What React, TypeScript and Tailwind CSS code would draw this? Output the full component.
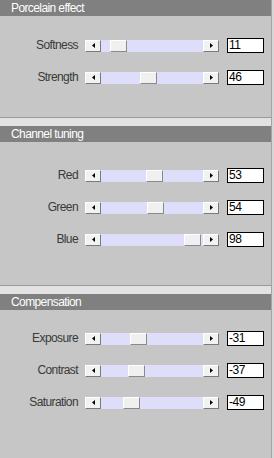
import React from "react";

type Row = { label: string; value: number; min: number; max: number };

const sections: { title: string; rows: Row[]; pt: string; pb: string }[] = [
  {
    title: "Porcelain effect",
    pt: "pt-[22px]",
    pb: "pb-[32px]",
    rows: [
      { label: "Softness", value: 11, min: 0, max: 100 },
      { label: "Strength", value: 46, min: 0, max: 100 },
    ],
  },
  {
    title: "Channel tuning",
    pt: "pt-[26px]",
    pb: "pb-[38px]",
    rows: [
      { label: "Red", value: 53, min: 0, max: 100 },
      { label: "Green", value: 54, min: 0, max: 100 },
      { label: "Blue", value: 98, min: 0, max: 100 },
    ],
  },
  {
    title: "Compensation",
    pt: "pt-[21px]",
    pb: "pb-[40px]",
    rows: [
      { label: "Exposure", value: -31, min: -100, max: 100 },
      { label: "Contrast", value: -37, min: -100, max: 100 },
      { label: "Saturation", value: -49, min: -100, max: 100 },
    ],
  },
];

const ArrowBtn = ({ dir }: { dir: "left" | "right" }) => (
  <div className="w-[16px] h-[12px] shrink-0 bg-[#f2f2f2] border border-t-white border-l-white border-b-[#7a7a7a] border-r-[#7a7a7a] flex items-center justify-center">
    <svg width="3" height="5" viewBox="0 0 3 5">
      {dir === "left" ? <path d="M3 0V5L0 2.5Z" fill="#000" /> : <path d="M0 0V5L3 2.5Z" fill="#000" />}
    </svg>
  </div>
);

const Slider = ({ row }: { row: Row }) => {
  const pct = (row.value - row.min) / (row.max - row.min);
  return (
    <div className="flex w-[134px] h-[12px] shrink-0">
      <ArrowBtn dir="left" />
      <div className="relative flex-1 bg-[#dedefa]">
        <div
          className="absolute top-0 w-[17px] h-[12px] bg-[#f0f0f0] border border-t-white border-l-white border-b-[#8a8a8a] border-r-[#8a8a8a]"
          style={{ left: Math.round(pct * 85) }}
        />
      </div>
      <ArrowBtn dir="right" />
    </div>
  );
};

const SliderRow = ({ row }: { row: Row }) => (
  <div className="flex items-center h-[15px]">
    <div className="w-[78px] text-right text-[12px] leading-[15px] tracking-[-0.6px] text-[#3a3a3a]">{row.label}</div>
    <div className="ml-[7px]">
      <Slider row={row} />
    </div>
    <div className="ml-[8px] w-[37px] h-[15px] bg-white border border-black pl-[1px] text-[12px] leading-[13px] tracking-[-0.5px] text-black">
      {row.value}
    </div>
  </div>
);

export default function App() {
  return (
    <div className="flex w-[274px] h-[458px] bg-[#c6c6c6]" style={{ fontFamily: '"Liberation Sans", Arial, sans-serif' }}>
      <div className="w-[271px] flex flex-col">
        {sections.map((s, i) => (
          <div key={s.title}>
            {i > 0 && (
              <>
                <div className="h-[1px] bg-[#9a9a9a]" />
                <div className="h-[8px] bg-[#e2e2e2]" />
              </>
            )}
            <div className="h-[16px] bg-[#808080] text-white text-[12px] leading-[16px] pl-[11px] tracking-[-0.6px]">{s.title}</div>
            <div className={`flex flex-col gap-[17px] ${s.pt} ${s.pb}`}>
              {s.rows.map((r) => (
                <SliderRow key={r.label} row={r} />
              ))}
            </div>
          </div>
        ))}
      </div>
      <div className="w-[1px] bg-[#a4a4a4]" />
      <div className="w-[2px] bg-[#d6d6d6]" />
    </div>
  );
}
